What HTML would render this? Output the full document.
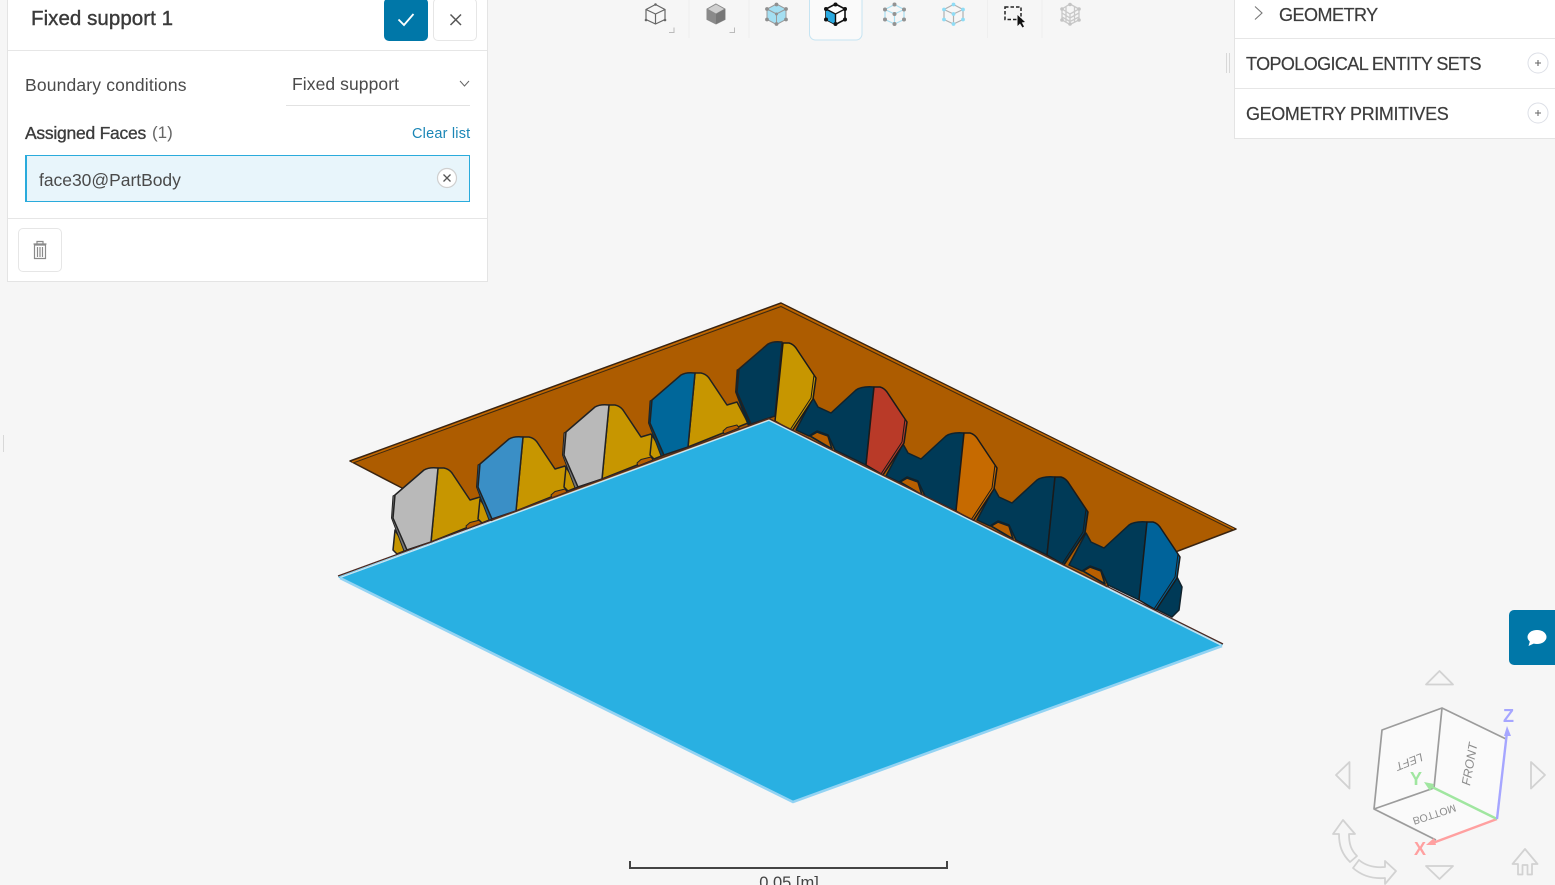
<!DOCTYPE html>
<html lang="en"><head><meta charset="utf-8"><title>Fixed support 1</title>
<style>
html,body{margin:0;padding:0;width:1555px;height:885px;overflow:hidden;background:#f6f6f6;font-family:"Liberation Sans",sans-serif;color:#3c3c3c}
.a{position:absolute;white-space:nowrap;box-sizing:border-box}
svg.bg{position:absolute;left:0;top:0}
</style></head><body>
<svg class="bg" width="1555" height="885" viewBox="0 0 1555 885" xmlns="http://www.w3.org/2000/svg">
<defs>
<g id="lrib" stroke="#222" stroke-width="1.500" stroke-linejoin="round">
<path fill="#c79600" d="M438,468 L444,468 Q449,469 452,473 L470,500 L480,497 L491,518 L431,542Z"/>
<polygon fill="#c79600" points="395,530 393,550 397,554 407,550"/>
<polygon fill="#b85f00" stroke-width="1" points="466,526 470,522.500 480,520 482,523 467,529"/>
</g>
<path id="lf" stroke="#222" stroke-width="1.500" stroke-linejoin="round" d="M395,495 L424,470 Q429,467 438,468 L431,542 L407,550 L393,518Z"/>
<polygon id="lb" stroke="#222" stroke-width="1" stroke-linejoin="round" points="395,495 393,518 407,550 404,551 391.500,518 393,496"/>
<g id="rrib" stroke="#10222c" stroke-width="1.500" stroke-linejoin="round">
<path fill="#003a57" d="M796,430 L813,398 L818,407 L831,413 L856,390 Q862,386 874,387 L866,465 L835,450 L828,435 L817,431 L809,436Z"/>
<polygon fill="#b85f00" stroke-width="1.700" points="810,436 817,432 828,436 832,449"/>
</g>
<g id="rf" stroke="#1a1a1a" stroke-width="1.500" stroke-linejoin="round">
<path d="M874,387 L880,387 Q884,388 887,392 L905,419 L907,422 L904,443 L883,475 L866,465Z"/>
<path fill="none" stroke-width="1" d="M905,419 L902,442 L881,474"/>
</g>
</defs>

<!-- brown plate -->
<polygon fill="#ad5c00" stroke="#3a2410" stroke-width="1.500" stroke-linejoin="round" points="350,461 781,303 1236,529 1178,551 1000,640 600,560 402,488"/>
<polyline fill="none" stroke="#3f2a10" stroke-width="1" points="353,463 781,306.500 1233,530"/>
<polyline fill="none" stroke="#c66a00" stroke-width="1.200" points="352,462 781,304.500 1234,529"/>

<!-- end piece right -->
<polygon fill="#003a57" stroke="#10222c" stroke-width="1.500" points="1177,577 1182,587 1179,610 1172,617 1150,606"/>

<!-- left ribs -->
<use href="#lrib"/>
<use href="#lrib" transform="translate(85,-31)"/>
<use href="#lrib" transform="translate(171,-63)"/>
<use href="#lrib" transform="translate(257,-95)"/>
<use href="#lb" fill="#777"/><use href="#lf" fill="#b9b9b9"/>
<use href="#lb" fill="#1c5f88" transform="translate(85,-31)"/><use href="#lf" fill="#3a8fc6" transform="translate(85,-31)"/>
<use href="#lb" fill="#777" transform="translate(171,-63)"/><use href="#lf" fill="#b9b9b9" transform="translate(171,-63)"/>
<use href="#lb" fill="#00405f" transform="translate(257,-95)"/><use href="#lf" fill="#00679a" transform="translate(257,-95)"/>
<use href="#lb" fill="#002a40" transform="translate(344,-126)"/><use href="#lf" fill="#003a57" transform="translate(344,-126)"/>

<!-- right ribs -->
<use href="#rrib"/>
<use href="#rrib" transform="translate(90,46)"/>
<use href="#rrib" transform="translate(181,90)"/>
<use href="#rrib" transform="translate(273,135)"/>
<use href="#rf" fill="#c79600" transform="translate(-91,-44)"/>
<use href="#rf" fill="#b93a28"/>
<use href="#rf" fill="#c66a00" transform="translate(90,46)"/>
<use href="#rf" fill="#003a57" transform="translate(181,90)"/>
<use href="#rf" fill="#00639a" transform="translate(273,135)"/>

<!-- blue plate -->
<polygon fill="#29b0e2" points="338,577 769,420 1223,645 793,803"/>
<polyline fill="none" stroke="#4a2a24" stroke-width="1.300" points="338,576 769,418.500 1223,644"/>
<polyline fill="none" stroke="#c9e4f2" stroke-width="1.400" points="340,577.500 769,420.200 1221,645"/>
<polyline fill="none" stroke="#93d3f3" stroke-width="2.600" points="340,578 793,802 1222,646"/>

<!-- toolbar separators -->
<g stroke="#efefef" stroke-width="1"><line x1="689" y1="0" x2="689" y2="38"/><line x1="749" y1="0" x2="749" y2="38"/><line x1="987.500" y1="0" x2="987.500" y2="38"/><line x1="1042" y1="0" x2="1042" y2="38"/></g>
<!-- active tab -->
<path d="M809.500,-2V34a6,6 0 0 0 6,6H856a6,6 0 0 0 6,-6V-2" fill="#fafafa" stroke="#c6e4f2" stroke-width="1"/>

<!-- icon 1 wire -->
<g fill="none" stroke="#666" stroke-width="1.200"><path d="M655.500,4.500 665,9.500 V19.500 L655.500,24 646,19.500 V9.500Z M646,9.500 655.500,14 665,9.500 M655.500,14V24"/></g>
<g fill="#666"><circle cx="655.500" cy="4.500" r="1.300"/><circle cx="665" cy="20" r="1.300"/><circle cx="646" cy="20" r="1.300"/></g>
<path d="M669,32.500H674V27.500" fill="none" stroke="#bbb" stroke-width="1"/>
<!-- icon 2 solid -->
<path d="M716,4 725,9 V19.500 L716,24 707,19.500 V9Z" fill="#8a8a8a" stroke="#8a8a8a"/><path d="M716,4.500 724,9 716,13.500 708,9Z" fill="#cfcfcf"/><path d="M716,14 725,9V19.500L716,24Z" fill="#777"/>
<path d="M729.500,32.500H734.500V27.500" fill="none" stroke="#bbb" stroke-width="1"/>
<!-- icon 3 -->
<path d="M776.500,4 786,9 V19.500 L776.500,24.500 767,19.500 V9Z" fill="#a4dff2" stroke="#9a9a9a"/><path d="M767,9 776.500,14 786,9 M776.500,14V24.500" fill="none" stroke="#9a9a9a"/>
<g fill="#8f8f8f"><circle cx="776.500" cy="4.500" r="1.900"/><circle cx="786" cy="9" r="1.900"/><circle cx="786" cy="19.500" r="1.900"/><circle cx="776.500" cy="24" r="1.900"/><circle cx="767" cy="19.500" r="1.900"/><circle cx="767" cy="9" r="1.900"/><circle cx="776.500" cy="14" r="1.500"/></g>
<!-- icon 4 active -->
<path d="M835.500,4 845,9 V19.500 L835.500,24.500 826,19.500 V9Z" fill="#fff" stroke="#111" stroke-width="1.600"/><path d="M826,9 835.500,14V24.500L826,19.500Z" fill="#29a9e0"/><path d="M826,9 835.500,14 845,9 M835.500,14V24.500" fill="none" stroke="#111" stroke-width="1.400"/>
<g fill="#111"><circle cx="835.500" cy="4.500" r="2"/><circle cx="845" cy="9" r="2"/><circle cx="845" cy="19.500" r="2"/><circle cx="835.500" cy="24" r="2"/><circle cx="826" cy="19.500" r="2"/><circle cx="826" cy="9" r="2"/></g>
<!-- icon 5 -->
<path d="M894.500,4.500 904,9.500 V19.500 L894.500,24 885,19.500 V9.500Z M885,9.500 894.500,14 904,9.500 M894.500,14V24" fill="none" stroke="#a8dff2" stroke-width="1.200"/>
<g fill="#939393"><circle cx="894.500" cy="4.500" r="2"/><circle cx="904" cy="9.500" r="2"/><circle cx="904" cy="19.500" r="2"/><circle cx="894.500" cy="24" r="2"/><circle cx="885" cy="19.500" r="2"/><circle cx="885" cy="9.500" r="2"/><circle cx="894.500" cy="14" r="2"/></g>
<!-- icon 6 -->
<path d="M953.500,4.500 963,9.500 V19.500 L953.500,24 944,19.500 V9.500Z M944,9.500 953.500,14 963,9.500 M953.500,14V24" fill="none" stroke="#b0b0b0" stroke-width="1.200"/>
<g fill="#8fdcf5"><circle cx="953.500" cy="4.500" r="1.900"/><circle cx="963" cy="9.500" r="1.900"/><circle cx="963" cy="19.500" r="1.900"/><circle cx="953.500" cy="24" r="1.900"/><circle cx="944" cy="19.500" r="1.900"/><circle cx="944" cy="9.500" r="1.900"/><circle cx="953.500" cy="14" r="1.900"/></g>
<!-- icon 7 -->
<rect x="1005" y="7" width="16" height="12.500" fill="none" stroke="#222" stroke-width="1.500" stroke-dasharray="3.500 2"/>
<path d="M1017.500,15 V26 L1020,23.500 1022.500,27.500 1024,26.500 1021.800,22.500 1025,22Z" fill="#111"/>
<!-- icon 8 -->
<g fill="none" stroke="#c9c9c9" stroke-width="1.300"><path d="M1070,4 1079,9 V20 L1070,24.500 1062,20 V9Z M1062,9 1070,14 1079,9 M1070,14V24.500 M1066,6.500V22 M1062,13 1070,18 1079,13 M1062,17 1070,21.500 1079,17 M1074.500,6.500V22"/></g>
<g fill="#c4c4c4"><circle cx="1070" cy="4.500" r="1.800"/><circle cx="1079" cy="9" r="1.800"/><circle cx="1079" cy="20" r="1.800"/><circle cx="1070" cy="24" r="1.800"/><circle cx="1062" cy="20" r="1.800"/><circle cx="1062" cy="9" r="1.800"/></g>

<!-- panel handle and tick -->
<g stroke="#d8d8d8" stroke-width="1"><line x1="1226.500" y1="53" x2="1226.500" y2="73"/><line x1="1229.500" y1="53" x2="1229.500" y2="73"/><line x1="3.500" y1="435" x2="3.500" y2="452"/></g>

<!-- scale -->
<path d="M630,861V868H947V861" fill="none" stroke="#444" stroke-width="2"/>
<text x="789" y="888" text-anchor="middle" font-family="Liberation Sans, sans-serif" font-size="16.500" fill="#444">0.05 [m]</text>

<!-- view cube -->
<polygon points="1442,708 1382,730 1374,809 1436,840 1497,819 1506,739" fill="#fafafa"/>
<g fill="none" stroke="#9c9c9c" stroke-width="1.700" stroke-linejoin="round"><path d="M1506,739 1442,708 1382,730 1374,809 1436,840"/><path d="M1442,708 1434,788 1374,809"/></g>
<g font-family="Liberation Sans, sans-serif" fill="#8c8c8c" font-style="italic">
<text transform="translate(1421,753) rotate(158)" font-size="11.500">LEFT</text>
<text transform="translate(1470,786) rotate(-80)" font-size="12.500">FRONT</text>
<text transform="translate(1412,818) rotate(-18) scale(1,-1)" font-size="10.500" font-style="normal">BOTTOM</text>
</g>
<line x1="1497" y1="819" x2="1430" y2="844" stroke="#ffa0a0" stroke-width="2.400"/><polygon points="1426,845 1434,838 1436,845" fill="#ffa0a0"/>
<line x1="1497" y1="819" x2="1428" y2="785" stroke="#a0e6a0" stroke-width="2.400"/><polygon points="1424,782 1434,784 1430,791" fill="#a0e6a0"/>
<line x1="1497" y1="819" x2="1507" y2="732" stroke="#a6a6ff" stroke-width="2.400"/><polygon points="1507,726 1511,736 1504,736" fill="#a6a6ff"/>
<g font-family="Liberation Sans, sans-serif" font-weight="bold" font-size="18">
<text x="1414" y="855" fill="#ffa0a0">X</text><text x="1410" y="785" fill="#a0e6a0">Y</text><text x="1503" y="722" fill="#a6a6ff" font-size="18">Z</text></g>

<!-- nav arrows -->
<g fill="none" stroke="#d2d2d2" stroke-width="1.800" stroke-linejoin="round">
<polygon points="1426,684.500 1439.500,671 1453,684.500"/>
<polygon points="1426,866 1453,866 1439.500,879"/>
<polygon points="1349.500,762 1336,775 1349.500,788.500"/>
<polygon points="1531,762 1545,775 1531,788.500"/>
<path d="M1518,874.500V864H1512.500L1525,849 1537.500,864H1532V874.500H1527.500V865H1522.500V874.500Z" />
<path d="M1350,862 C1342,854 1339,846 1339,834 H1333 L1343,820 1355,834 H1349 C1349,844 1351,850 1357,856Z"/>
<path d="M1353,868 C1362,876 1372,879 1385,878 V884 L1396,871 1385,861 V867 C1374,868 1366,866 1359,860Z"/>
</g>
</svg>

<!-- left panel -->
<div class="a" style="left:7px;top:-1px;width:481px;height:283px;background:#fff;border:1px solid #e4e4e4"></div>
<div class="a" style="left:8px;top:50px;width:479px;height:1px;background:#e6e6e6"></div>
<div class="a" style="left:8px;top:218px;width:479px;height:1px;background:#e6e6e6"></div>
<div class="a" style="left:31px;top:6px;font-size:20.500px;line-height:26px;font-weight:normal;color:#3a3a3a;-webkit-text-stroke:.4px #3a3a3a;letter-spacing:.05px">Fixed support 1</div>
<div class="a" style="left:384px;top:-2px;width:44px;height:43px;background:#0077a8;border-radius:5px"></div>
<svg class="a" style="left:384px;top:0" width="44" height="40"><path d="M14.500,19.500 20,25 29.500,14" fill="none" stroke="#fff" stroke-width="1.800"/></svg>
<div class="a" style="left:433px;top:-2px;width:44px;height:43px;background:#fff;border:1px solid #e6e6e6;border-radius:5px"></div>
<svg class="a" style="left:433px;top:0" width="44" height="40"><path d="M17.500,14.500 28,25 M28,14.500 17.500,25" fill="none" stroke="#555" stroke-width="1.500"/></svg>
<div class="a" style="left:25px;top:74px;font-size:17.500px;line-height:22px;color:#4a4a4a;letter-spacing:.16px">Boundary conditions</div>
<div class="a" style="left:292px;top:73px;font-size:17.500px;line-height:22px;color:#4a4a4a;letter-spacing:.08px">Fixed support</div>
<svg class="a" style="left:458px;top:78px" width="14" height="12"><path d="M2,3 6.500,8 11,3" fill="none" stroke="#666" stroke-width="1"/></svg>
<div class="a" style="left:286px;top:105px;width:184px;height:1px;background:#e2e2e2"></div>
<div class="a" style="left:25px;top:122px;font-size:17.500px;line-height:22px;color:#3c3c3c;-webkit-text-stroke:.35px #3c3c3c;letter-spacing:-.25px">Assigned Faces</div>
<div class="a" style="left:152px;top:122px;font-size:17px;line-height:22px;color:#666">(1)</div>
<div class="a" style="left:412px;top:124px;font-size:14.500px;line-height:20px;color:#1b86b6;letter-spacing:.2px">Clear list</div>
<div class="a" style="left:25px;top:155px;width:445px;height:47px;background:#e8f5fb;border:1px solid #2aabdc;border-left-width:2px"></div>
<div class="a" style="left:39px;top:169px;font-size:17.500px;line-height:23px;color:#4a4a4a;letter-spacing:-.03px">face30@PartBody</div>
<svg class="a" style="left:436px;top:167px" width="22" height="22"><circle cx="11" cy="11" r="9.500" fill="#fff" stroke="#cfcfcf" stroke-width="1.200"/><path d="M7.500,7.500 14.500,14.500 M14.500,7.500 7.500,14.500" stroke="#555" stroke-width="1.300"/></svg>
<div class="a" style="left:18px;top:228px;width:44px;height:44px;background:#fff;border:1px solid #e6e6e6;border-radius:5px"></div>
<svg class="a" style="left:18px;top:228px" width="44" height="44"><path d="M15.500,16H28.500 M19,15.500V13.500H25V15.500 M16.500,17V30.500H27.500V17Z M19.500,19V29 M22,19V29 M24.500,19V29" fill="none" stroke="#8a8a8a" stroke-width="1.200"/></svg>

<!-- right panel -->
<div class="a" style="left:1234px;top:-1px;width:323px;height:140px;background:#fff;border:1px solid #e4e4e4"></div>
<div class="a" style="left:1235px;top:38px;width:320px;height:1px;background:#e6e6e6"></div>
<div class="a" style="left:1235px;top:88px;width:320px;height:1px;background:#e6e6e6"></div>
<svg class="a" style="left:1252px;top:5px" width="14" height="16"><path d="M3,1.500 10,8 3,14.500" fill="none" stroke="#777" stroke-width="1.100"/></svg>
<div class="a" style="left:1279px;top:3px;font-size:18px;line-height:24px;color:#3c3c3c;letter-spacing:-.5px;-webkit-text-stroke:.2px #3c3c3c">GEOMETRY</div>
<div class="a" style="left:1246px;top:52px;font-size:18px;line-height:24px;color:#3c3c3c;letter-spacing:-.6px;-webkit-text-stroke:.2px #3c3c3c">TOPOLOGICAL ENTITY SETS</div>
<div class="a" style="left:1246px;top:102px;font-size:18px;line-height:24px;color:#3c3c3c;letter-spacing:-.37px;-webkit-text-stroke:.2px #3c3c3c">GEOMETRY PRIMITIVES</div>
<svg class="a" style="left:1527px;top:52px" width="22" height="72"><circle cx="11" cy="11" r="10" fill="#fff" stroke="#dcdfe6"/><path d="M8,11H14 M11,8V14" stroke="#666" stroke-width="1.100"/><circle cx="11" cy="61" r="10" fill="#fff" stroke="#dcdfe6"/><path d="M8,61H14 M11,58V64" stroke="#666" stroke-width="1"/></svg>

<!-- chat -->
<div class="a" style="left:1509px;top:610px;width:46px;height:55px;background:#0077a8;border-radius:5px 0 0 5px"></div>
<svg class="a" style="left:1524px;top:626px" width="26" height="24"><ellipse cx="13" cy="11" rx="9.500" ry="7" fill="#fff"/><path d="M6,15 L4.500,20 L11,17Z" fill="#fff"/></svg>
</body></html>
